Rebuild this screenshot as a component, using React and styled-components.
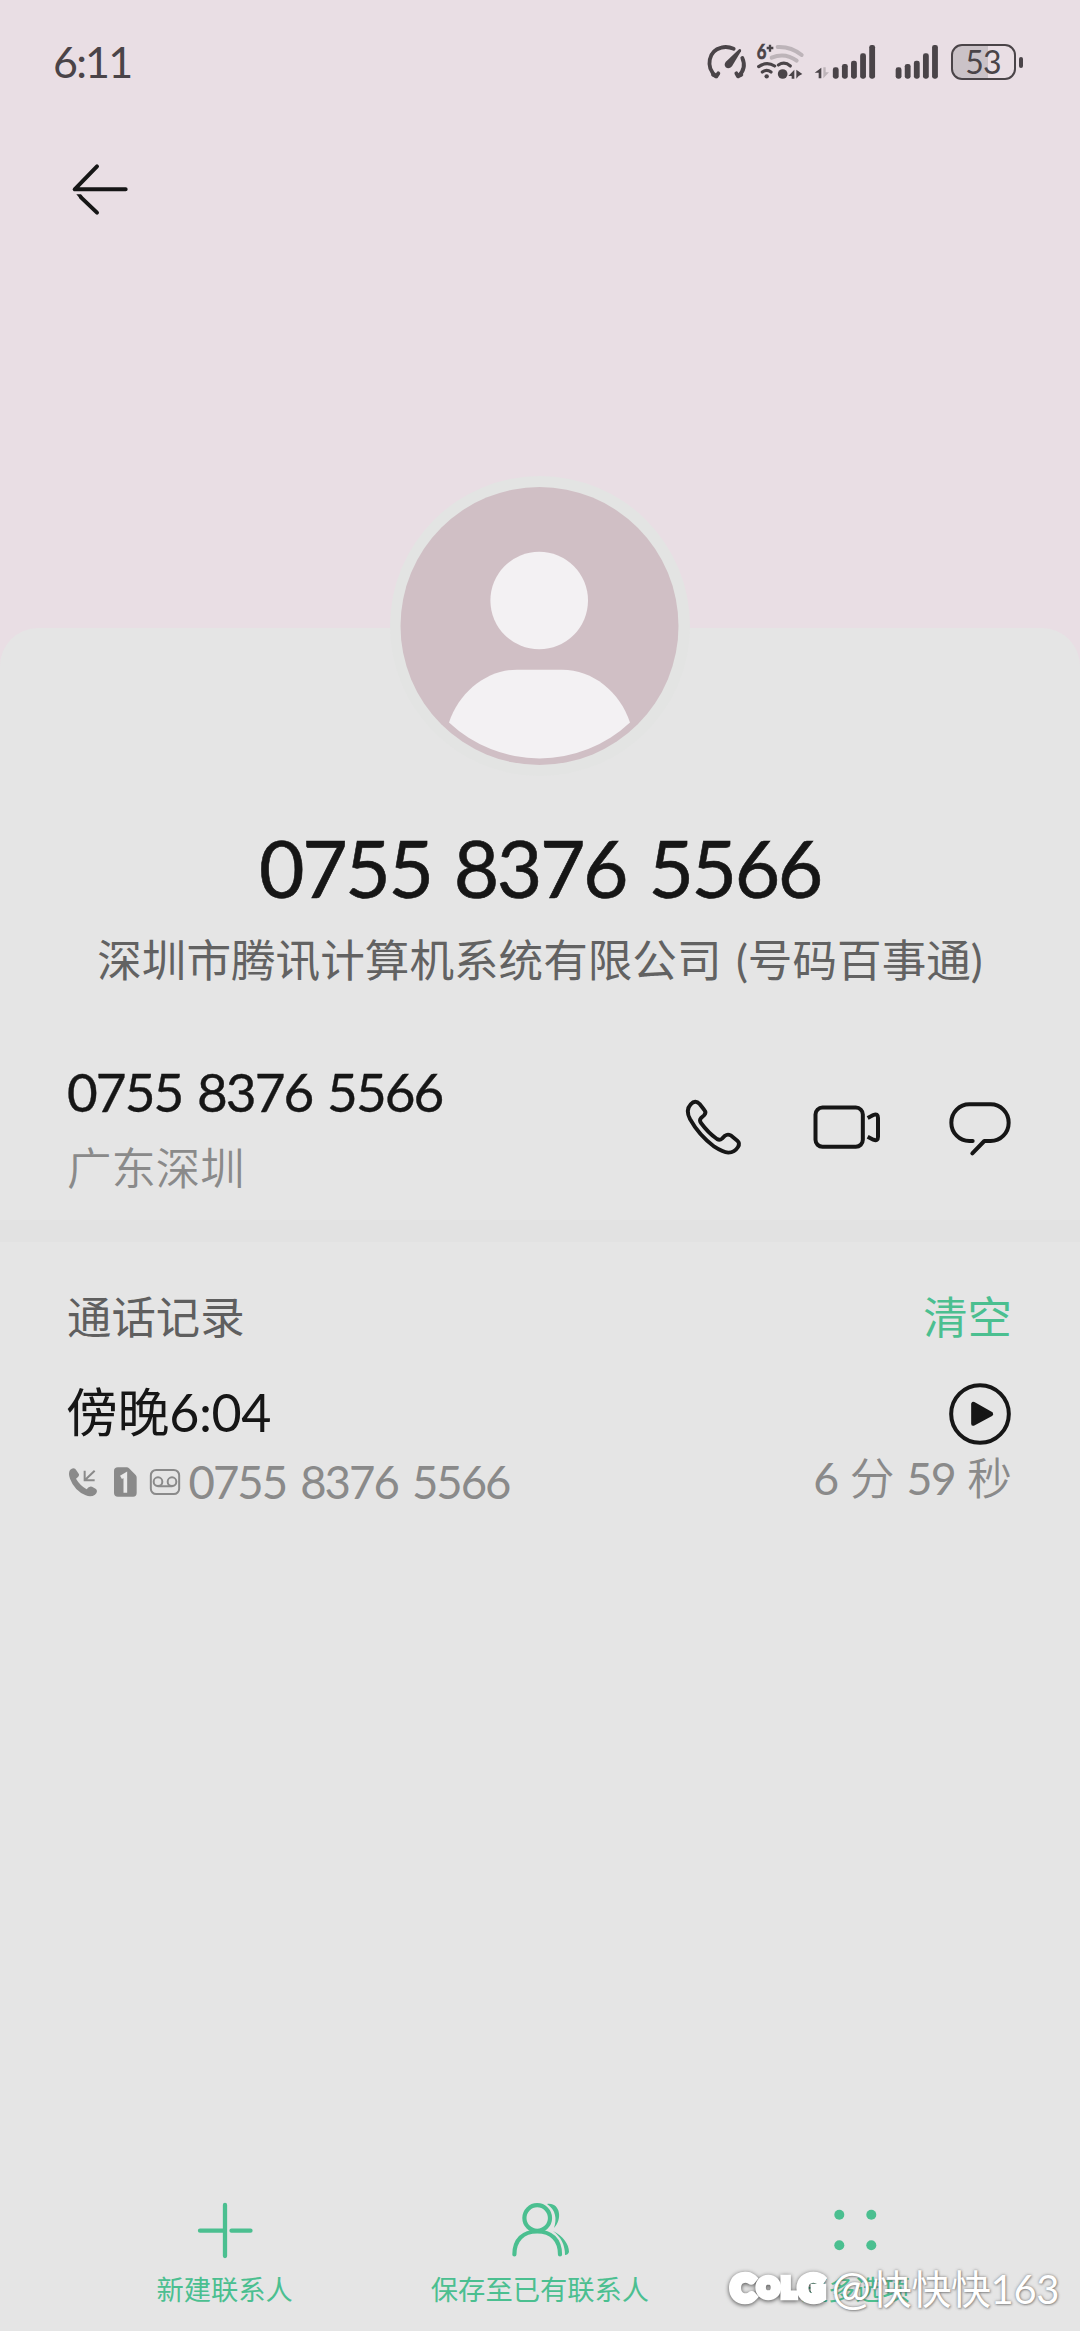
import React from "react";
import styled, { createGlobalStyle } from "styled-components";

const ink = "#161616";
const statusInk = "#4a4448";
const grey = "#8a8a8a";
const green = "#4bbf90";

const GlobalStyle = createGlobalStyle`
  * { box-sizing: border-box; }
  body { margin: 0; background: #e5e5e5; }
`;

const Screen = styled.main`
  position: relative;
  display: flex;
  flex-direction: column;
  width: 1080px;
  height: 2331px;
  overflow: hidden;
  background: #e9dee4;
  color: ${ink};
  font-family: Lato, "Noto Sans CJK SC", sans-serif;
  font-variant-ligatures: none;
`;

const Header = styled.header`
  height: 628px;
  flex: none;
`;

const StatusBar = styled.div`
  display: flex;
  align-items: center;
  height: 84px;
  padding: 40px 57.5px 0 53px;
`;

const Clock = styled.span`
  flex: 1;
  font-size: 43px;
  line-height: 44px;
  color: ${statusInk};
  letter-spacing: -1.8px;
`;

const Glyph = styled.svg`
  display: block;
  flex: none;
  width: ${(p) => p.$w}px;
  height: ${(p) => p.$h}px;
  margin-left: ${(p) => p.$left || 0}px;
  overflow: visible;
`;

const Battery = styled.span`
  width: 65px;
  height: 36px;
  margin-left: 12px;
  border: 2.5px solid ${statusInk};
  border-radius: 11px;
  background: linear-gradient(90deg, #cac2c7 57%, transparent 57%);
  color: ${statusInk};
  font-size: 32px;
  line-height: 32px;
  letter-spacing: -0.8px;
  text-align: center;
`;

const BatteryCap = styled.span`
  width: 4px;
  height: 11px;
  margin-left: 3px;
  border-radius: 2px;
  background: ${statusInk};
`;

const TitleBar = styled.nav`
  display: flex;
  padding: 79px 0 0 72px;
`;

const Sheet = styled.section`
  display: flex;
  flex-direction: column;
  flex: 1;
  border-radius: 38px 38px 0 0;
  background: #e5e5e5;
`;

const Profile = styled.div`
  display: flex;
  flex-direction: column;
  align-items: center;
  height: 425px;
`;

const Avatar = styled.svg`
  flex: none;
  width: 300px;
  height: 300px;
  margin-top: -152px;
`;

const Name = styled.h1`
  margin: 42px 0 0;
  font-size: 78.5px;
  line-height: 100px;
  font-weight: 400;
  letter-spacing: -2.4px;
  word-spacing: 4.5px;
  white-space: nowrap;
  -webkit-text-stroke: 0.6px ${ink};
`;

const Company = styled.p`
  margin: 12px 0 0;
  font-size: 44.6px;
  line-height: 60px;
  color: #626262;
  word-spacing: 3px;
  white-space: nowrap;
`;

const NumberRow = styled.div`
  display: flex;
  justify-content: space-between;
  height: 167px;
  padding: 0 69px 0 67px;
`;

const NumberText = styled.div`
  padding-top: 9px;
  font-size: 53px;
  line-height: 60px;
  letter-spacing: -1.9px;
  word-spacing: 3px;
  white-space: nowrap;
  -webkit-text-stroke: 0.4px ${ink};
`;

const Region = styled.div`
  margin-top: 16px;
  font-size: 44.4px;
  line-height: 60px;
  font-weight: 350;
  color: ${grey};
`;

const Actions = styled.div`
  display: flex;
  align-items: center;
  height: 147px;
`;

const Divider = styled.div`
  height: 22px;
  background: #e2e2e2;
`;

const SectionHead = styled.div`
  display: flex;
  justify-content: space-between;
  margin-top: 45px;
  padding: 0 68px 0 67px;
  font-size: 44.4px;
  line-height: 60px;
  color: #5f5f5f;
`;

const Clear = styled.span`
  color: ${green};
`;

const CallRow = styled.div`
  display: flex;
  justify-content: space-between;
  margin-top: 33px;
  padding: 0 69px 0 66px;
`;

const CallInfo = styled.div`
  display: flex;
  flex-direction: column;
`;

const CallSide = styled.div`
  display: flex;
  flex-direction: column;
  align-items: flex-end;
  padding-top: 3px;
`;

const CallTime = styled.div`
  font-size: 52px;
  line-height: 64px;
  letter-spacing: -0.4px;
`;

const CallMeta = styled.div`
  display: flex;
  align-items: center;
  margin-top: 8px;
  padding-left: 3px;
  height: 60px;
`;

const CallNumber = styled.span`
  margin-left: 9px;
  font-size: 45.5px;
  line-height: 60px;
  color: ${grey};
  letter-spacing: -2px;
  word-spacing: 4.5px;
  white-space: nowrap;
`;

const Duration = styled.span`
  margin: 3px -1px 0 0;
  font-size: 44.7px;
  line-height: 60px;
  font-weight: 350;
  color: ${grey};
  white-space: nowrap;
`;

const Digits = styled.span`
  font-weight: 400;
  letter-spacing: -1.6px;
`;

const Toolbar = styled.footer`
  display: grid;
  grid-template-columns: repeat(3, 1fr);
  height: 131px;
  margin-top: auto;
  padding: 0 67px;
`;

const Tool = styled.div`
  display: flex;
  flex-direction: column;
  align-items: center;
  gap: 9.5px;
  font-size: 27.3px;
  line-height: 40px;
  color: ${green};
  white-space: nowrap;
`;

const Watermark = styled.div`
  position: absolute;
  right: 21px;
  bottom: 14px;
  display: flex;
  align-items: center;
  gap: 7px;
  height: 60px;
  color: #fff;
`;

const Brand = styled.span`
  display: flex;
  align-items: center;
  gap: 3px;
  height: 44px;
  font-weight: 900;
  -webkit-text-stroke: 6.5px #fff;
  stroke-linejoin: round;
  filter: drop-shadow(0 1px 2px rgba(0, 0, 0, 0.65));
`;

const BrandLetter = styled.span`
  font-size: ${(p) => p.$size}px;
  line-height: 44px;
`;

const Handle = styled.span`
  font-size: 40px;
  line-height: 60px;
  letter-spacing: -0.4px;
  text-shadow: 0 0 3px rgba(90, 90, 90, 0.75), 1px 1px 2px rgba(90, 90, 90, 0.45);
  white-space: nowrap;
`;

const AtSign = styled.span`
  font-size: 47px;
  letter-spacing: 1px;
`;

const line = { fill: "none", strokeLinecap: "round", strokeLinejoin: "round" };
const barTops = [112, 102, 92, 70, 45];

function Bars({ start }) {
  return barTops.map((top, i) => (
    <rect key={top} x={start + i * 27.3} y={top} width="17.500" height={146 - top} rx="7" fill={statusInk} />
  ));
}

function GaugeIcon() {
  return (
    <Glyph $w={40} $h={40} viewBox="48 36 120 120">
      <g {...line} stroke={statusInk} strokeWidth="11.500">
        <path d="M75 139 C42 111 53 62 91 53 Q108 48 128 56" />
        <path d="M66 134 L76 139 L82 130" />
        <path d="M154 84 C164 107 156 126 142 139 M136 130 L141 139 L151 134" />
      </g>
      <path d="M145 57 Q152 57 150 64 L123 109 Q114 119 104 112 Q97 103 106 94 Z" fill={statusInk} />
    </Glyph>
  );
}

function WifiIcon() {
  return (
    <Glyph $w={50} $h={40} $left={9} viewBox="195 36 150 120">
      <g {...line} strokeWidth="12" stroke="#bdb4b9">
        <path d="M260 51 Q300 49 332 75" />
        <path d="M242 83 Q282 66 317 92" />
      </g>
      <text x="197" y="86" fontSize="60" fontWeight="700" fill={statusInk} stroke={statusInk} strokeWidth="2" textLength="29" lengthAdjust="spacingAndGlyphs">6</text>
      <path d="M227 54 H247 M237 44 V65" stroke={statusInk} strokeWidth="7" />
      <g {...line} strokeWidth="9.500" stroke={statusInk}>
        <path d="M203 110 Q227 93 251 108" />
        <path d="M214 126 Q227 116 240 126" />
        <path d="M262 105 Q281 93 298 108" />
      </g>
      <circle cx="227" cy="139" r="6.500" fill={statusInk} />
      <circle cx="275" cy="132" r="14.500" fill={statusInk} />
      <path d="M310 119 V146 H302 V138 H292 Z M316 146 V119 L334 132 L323 138 Z" fill={statusInk} />
    </Glyph>
  );
}

function SignalIcon({ data }) {
  return data ? (
    <Glyph $w={62} $h={40} $left={8} viewBox="370 36 186 120">
      <path d="M392 113 V145 H384 V128 H372 Z" fill={statusInk} />
      <path d="M398 112 V145 L415 127 H405 V112 Z" fill="#bdb4b9" />
      <Bars start={426.5} />
    </Glyph>
  ) : (
    <Glyph $w={44} $h={40} $left={19} viewBox="612 36 132 120">
      <Bars start={614} />
    </Glyph>
  );
}

function BackIcon() {
  return (
    <Glyph $w={56} $h={54} viewBox="216 488 168 162">
      <g {...line} stroke={ink} strokeWidth="12">
        <path d="M291 498 L224 567 H377" />
        <path d="M243 591 L291 637" />
      </g>
      <path d="M229 582 H243 L248 588 L239 594 Z" fill={ink} />
    </Glyph>
  );
}

function PhoneIcon() {
  return (
    <Glyph $w={60} $h={60} viewBox="70 110 180 180">
      <path
        {...line}
        stroke={ink}
        strokeWidth="11.500"
        d="M90 132 Q104 117 117 131 L131 149 Q138 157 130 165 L121 173 Q115 180 121 188 Q143 218 169 236 Q177 241 184 235 L193 226 Q201 220 210 225 L230 241 Q239 249 232 260 Q222 276 203 277 Q187 276 161 259 Q115 225 88 176 Q74 149 90 132Z"
      />
    </Glyph>
  );
}

function VideoIcon() {
  return (
    <Glyph $w={70} $h={60} $left={68} viewBox="454 110 210 180">
      <g {...line} strokeLinecap="butt" stroke={ink} strokeWidth="12">
        <rect x="464.500" y="141.500" width="142" height="118" rx="21" />
        <path d="M621 173 L638 164 Q652 158 652 173 V229 Q652 244 638 238 L621 229" />
      </g>
    </Glyph>
  );
}

function MessageIcon() {
  return (
    <Glyph $w={62} $h={60} $left={67.5} viewBox="866 110 186 180">
      <path {...line} stroke={ink} strokeWidth="12" d="M937 242 H927 A54 55 0 0 1 927 132 H991 A54 55 0 0 1 991 242 H972 L936 279" />
    </Glyph>
  );
}

function IncomingIcon() {
  return (
    <Glyph $w={28} $h={29} viewBox="89 320 84 87">
      <path d="M92 326 Q104 315 112 328 L119 339 Q120 346 110 352 Q121 371 142 384 Q149 373 158 376 L170 383 Q177 391 167 400 Q155 409 139 402 Q105 387 92 352 Q86 336 92 326Z" fill={grey} />
      <path d="M166 328 L137 356 M136 328 V357 H166" fill="none" stroke={grey} strokeWidth="6" />
    </Glyph>
  );
}

function SimIcon() {
  return (
    <Glyph $w={23} $h={30} $left={16.5} viewBox="222 319 69 90">
      <path d="M234 320 H260 Q264 320 267 323 L287 343 Q290 346 290 351 V397 Q290 408 279 408 H234 Q222 408 222 397 V331 Q222 320 234 320Z" fill={grey} />
      <path d="M243 350 L256 342 V396" fill="none" stroke="#e9e9e9" strokeWidth="11" />
    </Glyph>
  );
}

function RecordingIcon() {
  return (
    <Glyph $w={30} $h={26} $left={13} viewBox="330 325 90 78">
      <g {...line} stroke={grey} strokeWidth="6">
        <rect x="332.500" y="328" width="85" height="72" rx="16" />
        <circle cx="354" cy="363" r="13" />
        <circle cx="396" cy="363" r="13" />
        <path d="M354 377 H396" />
      </g>
    </Glyph>
  );
}

function PlayIcon() {
  return (
    <Glyph $w={62} $h={62} viewBox="507 339 186 186">
      <circle cx="600" cy="432" r="86.500" fill="none" stroke={ink} strokeWidth="12" />
      <path d="M580 402 V461 L633 432Z" fill={ink} stroke={ink} strokeWidth="13" strokeLinejoin="round" />
    </Glyph>
  );
}

function PlusIcon() {
  return (
    <Glyph $w={60} $h={60} viewBox="0 0 60 60">
      <path {...line} stroke={green} strokeWidth="4.300" d="M30 5 V56 M5 30.700 H28 M36.500 30.700 H55.500" />
    </Glyph>
  );
}

function PeopleIcon() {
  return (
    <Glyph $w={60} $h={60} viewBox="510 2200 60 60">
      <g {...line} stroke={green} strokeWidth="4.200">
        <circle cx="537.200" cy="2218" r="12.800" />
        <path d="M514.400 2254.500 C514.400 2240 523 2231.500 537.200 2231.500 S560 2240 560 2254.500" />
      </g>
      <path d="M547 2204 C560 2202 563 2219 554 2228 C557 2219 556 2210 547 2204Z" fill={green} />
      <path d="M553 2231 C563 2236 569 2244 569 2252 Q568 2255 565 2255 C565 2245 561 2237 553 2231Z" fill={green} />
    </Glyph>
  );
}

function MoreIcon() {
  return (
    <Glyph $w={60} $h={60} viewBox="0 0 60 60" fill={green}>
      <circle cx="14.300" cy="14.700" r="5" />
      <circle cx="46.300" cy="14.700" r="5" />
      <circle cx="14.300" cy="45.300" r="5" />
      <circle cx="46.300" cy="45.300" r="5" />
    </Glyph>
  );
}

export default function App() {
  return (
    <>
      <GlobalStyle />
      <Screen>
        <Header>
          <StatusBar>
            <Clock>6:11</Clock>
            <GaugeIcon />
            <WifiIcon />
            <SignalIcon data />
            <SignalIcon />
            <Battery>53</Battery>
            <BatteryCap />
          </StatusBar>
          <TitleBar>
            <BackIcon />
          </TitleBar>
        </Header>
        <Sheet>
          <Profile>
            <Avatar viewBox="0 0 300 300">
              <circle cx="150" cy="150" r="150" fill="#e3e4e3" />
              <circle cx="149.500" cy="150" r="139" fill="#d0bfc5" />
              <circle cx="149.200" cy="124.500" r="48.800" fill="#f3f1f3" />
              <path d="M59 246.500 C69 216 97 193.700 127 193.700 H172 C203 193.700 230 216 240 246.500 A132 132 0 0 1 59 246.500Z" fill="#f3f1f3" />
            </Avatar>
            <Name>0755 8376 5566</Name>
            <Company>深圳市腾讯计算机系统有限公司 (号码百事通)</Company>
          </Profile>
          <NumberRow>
            <div>
              <NumberText>0755 8376 5566</NumberText>
              <Region>广东深圳</Region>
            </div>
            <Actions>
              <PhoneIcon />
              <VideoIcon />
              <MessageIcon />
            </Actions>
          </NumberRow>
          <Divider />
          <SectionHead>
            <span>通话记录</span>
            <Clear>清空</Clear>
          </SectionHead>
          <CallRow>
            <CallInfo>
              <CallTime>傍晚6:04</CallTime>
              <CallMeta>
                <IncomingIcon />
                <SimIcon />
                <RecordingIcon />
                <CallNumber>0755 8376 5566</CallNumber>
              </CallMeta>
            </CallInfo>
            <CallSide>
              <PlayIcon />
              <Duration>
                <Digits>6</Digits> 分 <Digits>59</Digits> 秒
              </Duration>
            </CallSide>
          </CallRow>
          <Toolbar>
            <Tool>
              <PlusIcon />
              新建联系人
            </Tool>
            <Tool>
              <PeopleIcon />
              保存至已有联系人
            </Tool>
            <Tool>
              <MoreIcon />
              更多选项
            </Tool>
          </Toolbar>
        </Sheet>
        <Watermark>
          <Brand>
            <BrandLetter $size={36}>C</BrandLetter>
            <BrandLetter $size={26}>O</BrandLetter>
            <BrandLetter $size={26}>L</BrandLetter>
            <BrandLetter $size={36}>G</BrandLetter>
          </Brand>
          <Handle>
            <AtSign>@</AtSign>快快快163
          </Handle>
        </Watermark>
      </Screen>
    </>
  );
}
